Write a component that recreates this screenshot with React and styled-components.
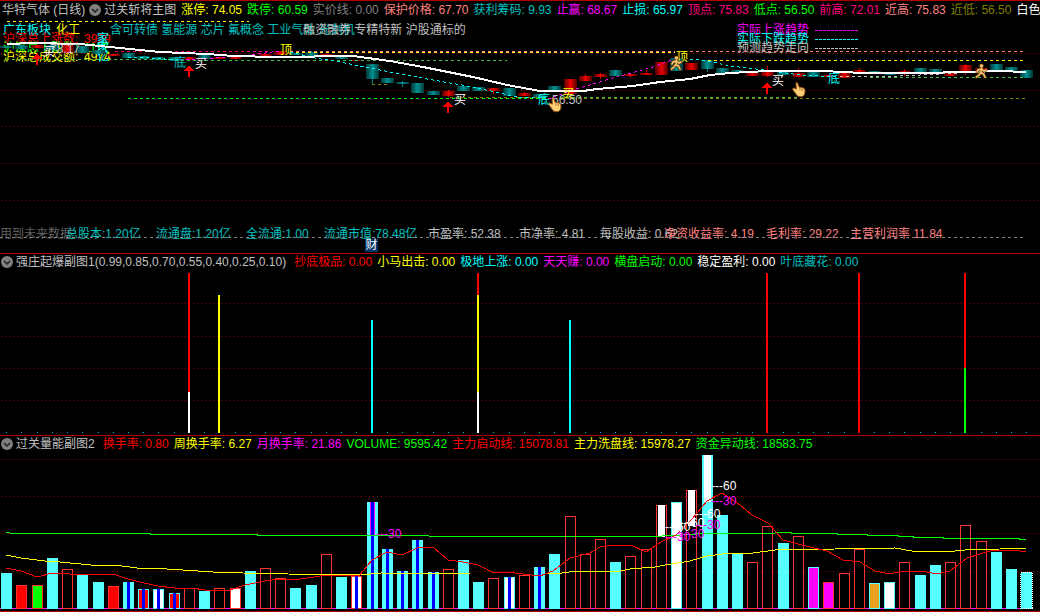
import React from 'react'
import styled, { createGlobalStyle } from 'styled-components'

const GlobalStyle = createGlobalStyle`
    body{
        margin:0;
        background:#000;
        font-family:"Liberation Sans","Noto Sans CJK SC",sans-serif;
        font-size:12px;
        color:#c0c0c0;
    }
`
const Container = styled.main`
    display:flex;
    flex-direction:column;
    overflow:hidden;
    border-bottom:1px solid #b00000;
`
const Panel = styled.section`
    border-top:1px solid #b00000;
`
const Header = styled.header`
    display:flex;
    align-items:center;
    gap:5px;
    height:18px;
    padding-left:2px;
    line-height:18px;
    white-space:nowrap;
    overflow:hidden;
`
const SubHeader = styled(Header)`
    box-sizing:border-box;
    padding-bottom:2px;
    line-height:16px;
`
const Title = styled.h2`
    margin:0;
    font-size:12px;
    font-weight:400;
    flex-shrink:0;
`
const SubTitle = styled(Title)`
    margin-right:3px;
`
const ToggleButton = styled.button`
    display:flex;
    flex-shrink:0;
    width:12px;
    height:12px;
    margin:0 -2px 0 -1px;
    padding:0;
    border:0;
    background:none;
`
const Reading = styled.span`
    flex-shrink:0;
    color:${props=>props.$color};
`
const Plot = styled.div`
    position:relative;
`
const Chart = styled.svg`
    position:relative;
    display:block;
    width:100%;
    height:auto;
    font-size:12px;
`
const Overlay = styled.div`
    position:absolute;
    inset:0;
    display:flex;
    flex-direction:column;
    justify-content:space-between;
    white-space:nowrap;
`
const Notes = styled.div`
    display:flex;
    padding:7px 0 0 3px;
`
const NotesLeft = styled.div`
    width:734px;
`
const Tags = styled.div`
    display:grid;
    grid-template-columns:53px 54px 193px auto;
    height:9px;
    line-height:9px;
`
const Counter = styled.div`
    display:grid;
    grid-template-columns:81px 13px auto;
    height:9px;
    line-height:9px;
    color:${props=>props.$color};
`
const Legend = styled.ul`
    margin:0;
    padding:0;
    list-style:none;
`
const LegendItem = styled.li`
    display:flex;
    align-items:center;
    gap:6px;
    height:9px;
    line-height:9px;
    color:${props=>props.$color};
`
const LegendLine = styled.span`
    width:43px;
    height:1px;
    background:repeating-linear-gradient(90deg,currentColor 0 3px,transparent 3px 4px);
`
const Stats = styled.div`
    display:grid;
    grid-template-columns:66px 90px 90px 78px 104px 91px 81px 64px 102px 84px auto;
    height:18px;
    margin-bottom:10px;
    line-height:18px;
`
const Badge = styled.span`
    position:absolute;
    left:365px;
    bottom:1px;
    width:13px;
    line-height:13px;
    text-align:center;
    color:#fff;
    background:#003366;
`

const mainReadings = [
    ['涨停: 74.05', '#ffff00'],
    ['跌停: 60.59', '#00ff00'],
    ['实价线: 0.00', '#808080'],
    ['保护价格: 67.70', '#ff8080'],
    ['获利筹码: 9.93', '#00c0c0'],
    ['止赢: 68.67', '#ff00ff'],
    ['止损: 65.97', '#00ffff'],
    ['顶点: 75.83', '#ff0080'],
    ['低点: 56.50', '#00ff00'],
    ['前高: 72.01', '#ff0080'],
    ['近高: 75.83', '#ff8080'],
    ['近低: 56.50', '#808000'],
    ['白色', '#ffffff'],
]
const signalReadings = [
    ['抄底极品: 0.00', '#ff0000'],
    ['小马出击: 0.00', '#ffff00'],
    ['极地上涨: 0.00', '#00ffff'],
    ['天天赚: 0.00', '#ff00ff'],
    ['横盘启动: 0.00', '#00ff00'],
    ['稳定盈利: 0.00', '#ffffff'],
    ['叶底藏花: 0.00', '#00c0c0'],
]
const volumeReadings = [
    ['换手率: 0.80', '#ff0000'],
    ['周换手率: 6.27', '#ffff00'],
    ['月换手率: 21.86', '#ff00ff'],
    ['VOLUME: 9595.42', '#00ff00'],
    ['主力启动线: 15078.81', '#ff0000'],
    ['主力洗盘线: 15978.27', '#ffff00'],
    ['资金异动线: 18583.75', '#00ff00'],
]
const stats = [
    ['用到未来数据', '#606060'],
    ['总股本:1.20亿', '#00c0c0'],
    ['流通盘:1.20亿', '#00c0c0'],
    ['全流通:1.00', '#00c0c0'],
    ['流通市值:78.48亿', '#00c0c0'],
    ['市盈率: 52.38', '#c0c0c0'],
    ['市净率: 4.81', '#c0c0c0'],
    ['每股收益: 0.62', '#c0c0c0'],
    ['净资收益率: 4.19', '#ff8080'],
    ['毛利率: 29.22', '#ff8080'],
    ['主营利润率 11.84', '#ff8080'],
]
const counters = [
    ['沪深总上涨数:', '3929', '家', '#ff0000'],
    ['沪深总下跌数:', '1117', '家', '#00ff00'],
    ['沪深总成交额:', '4974', '亿', '#ffff00'],
]
const legend = [
    ['实际上涨趋势', '#ff00ff'],
    ['实际下跌趋势', '#00ffff'],
    ['预测趋势走向', '#c0c0c0'],
]

// direction, body top, body bottom, wick top, wick bottom
const candles = [
    ['d', 46, 48], ['d', 45, 49], ['u', 45, 48], ['d', 45, 50], ['u', 45, 53], ['d', 46, 53],
    ['d', 50, 54], ['u', 54, 56], ['d', 53, 58], ['d', 56, 59], ['d', 57, 60], ['d', 57, 61],
    ['u', 57, 60], ['d', 55, 59], ['u', 57, 59], ['u', 56, 59], ['u', 55, 57], ['u', 54, 56],
    ['u', 51, 55], ['d', 53, 55], ['d', 52, 56, 51, 57], ['u', 54, 55], ['d', 57, 59], ['u', 60, 61],
    ['d', 64, 79, 64, 84], ['d', 78, 83], ['d', 82, 84, 81, 87], ['d', 83, 93], ['d', 91, 95],
    ['u', 91, 96, 90, 97], ['d', 86, 91], ['d', 87, 91], ['u', 88, 91, 88, 94], ['d', 88, 96],
    ['u', 93, 96, 92, 96], ['d', 94, 98], ['d', 86, 92], ['u', 79, 94], ['u', 76, 81, 74, 81],
    ['u', 74, 77, 73, 79], ['d', 70, 76], ['u', 74, 76, 73, 78], ['u', 73, 75, 70, 75], ['u', 62, 75],
    ['d', 58, 71], ['u', 63, 70], ['d', 60, 69, 60, 72], ['d', 68, 73], ['d', 70, 73], ['u', 73, 76],
    ['u', 71, 76, 66, 77], ['d', 71, 75], ['u', 73, 77, 68, 77], ['d', 72, 77], ['u', 75, 77],
    ['u', 73, 78], ['u', 70, 73, 68, 73], ['d', 71, 73], ['d', 73, 75], ['u', 71, 74, 69, 76],
    ['d', 68, 72], ['d', 69, 73], ['u', 73, 76], ['u', 65, 73, 64, 75], ['u', 68, 72], ['d', 64, 70],
    ['d', 67, 71], ['d', 70, 78],
]

// kind of fill, top of the bar
const volumes = [
    ['cyan', 573], ['red', 585], ['green', 585], ['cyan', 558], ['hollow', 569], ['cyan', 575],
    ['cyan', 582], ['red', 586], ['cyanBlue', 582], ['redBlue', 589], ['whiteBlue', 589],
    ['redBlue', 593], ['hollow', 588], ['cyan', 591], ['hollow', 588], ['whiteRed', 588],
    ['cyan', 571], ['hollow', 568], ['hollow', 578], ['cyan', 588], ['cyan', 585], ['hollow', 554],
    ['cyan', 577], ['whiteRedBlue', 576], ['cyanBlue', 502], ['cyanBlue', 549], ['cyanBlue', 571],
    ['cyanBlue', 540], ['cyanBlue', 572], ['hollow', 569], ['cyan', 560], ['cyan', 582],
    ['hollow', 578], ['whiteBlue', 577], ['hollow', 575], ['cyanBlue', 567], ['cyan', 554],
    ['hollow', 516], ['hollow', 554], ['hollow', 539], ['cyan', 562], ['hollow', 556],
    ['hollow', 549], ['hollow', 505], ['white', 502], ['hollow', 490], ['cyan', 455],
    ['cyan', 515], ['cyan', 554], ['hollow', 562], ['hollow', 526], ['cyan', 543], ['hollow', 536],
    ['magenta', 567], ['magentaRed', 582], ['hollow', 573], ['hollow', 549], ['orange', 583],
    ['white', 582], ['hollow', 562], ['cyan', 575], ['cyan', 565], ['hollow', 562], ['hollow', 525],
    ['hollow', 541], ['cyan', 552], ['cyan', 569], ['cyan', 572],
]
const CYAN = '#55ffff'
const RED = '#ff3232'
// edge, inside, core stripe
const fills = {
    cyan: [CYAN, CYAN],
    red: [RED, '#ff0000'],
    green: [RED, '#00ff00'],
    hollow: [RED, '#000000'],
    cyanBlue: [CYAN, CYAN, '#0000ff'],
    redBlue: [CYAN, '#ff0000', '#0000ff'],
    whiteBlue: [CYAN, '#ffffff', '#0000ff'],
    whiteRed: [RED, '#ffffff'],
    whiteRedBlue: [RED, '#ffffff', '#0000ff'],
    white: [CYAN, '#ffffff'],
    magenta: [CYAN, '#ff00ff'],
    magentaRed: [RED, '#ff00ff'],
    orange: [CYAN, '#e8a020'],
}

// x, top, bottom, colour
const signals = [
    [188, 273, 392, '#ff0000'], [188, 392, 433, '#ffffff'],
    [218, 295, 433, '#ffff00'],
    [371, 320, 433, '#00ffff'],
    [477, 273, 295, '#ff0000'], [477, 295, 392, '#ffff00'], [477, 392, 433, '#ffffff'],
    [569, 320, 433, '#00ffff'],
    [766, 273, 433, '#ff0000'],
    [858, 273, 433, '#ff0000'],
    [964, 273, 368, '#ff0000'], [964, 368, 433, '#00ff00'],
]

// text, x, baseline, colour
const marks = [
    ['底', 174, 67, '#00c0c0'], ['买', 195, 68, '#ffffff'], ['买', 43, 56, '#ffffff'],
    ['78.17', 50, 53, '#c0c0c0'], ['顶', 280, 54, '#ffff00'], ['买', 454, 104, '#ffffff'],
    ['底', 538, 104, '#00ffff'], ['56.50', 552, 104, '#c0c0c0'], ['买', 562, 98, '#ffff00'],
    ['顶', 676, 61, '#ffff00'], ['买', 772, 85, '#ffffff'], ['底', 828, 83, '#00ffff'],
]
const volumeMarks = [
    ['---30', 376, 538, '#ff00ff'],
    ['---60', 665, 531, '#ffffff'], ['---30', 665, 541, '#ff00ff'],
    ['---60', 679, 527, '#ffffff'], ['---30', 679, 538, '#ff00ff'],
    ['---60', 695, 518, '#ffffff'], ['---30', 695, 529, '#ff00ff'],
    ['---60', 711, 490, '#ffffff'], ['---30', 711, 505, '#ff00ff'],
]

// x1, y1, x2, y2, colour
const dashes = [
    [7, 21, 249, 21, '#ffff00'],
    [115, 51, 270, 51, '#ff0080'],
    [290, 51, 675, 51, '#ff8080'],
    [290, 52, 675, 52, '#ffff00'],
    [690, 51, 1026, 51, '#ff8080'],
    [708, 60, 1026, 60, '#ffff00'],
    [6, 59, 175, 59, '#40c040'],
    [175, 60, 507, 60, '#40c040'],
    [128, 98, 545, 98, '#00ff00'],
    [560, 97, 797, 97, '#40c040'],
    [560, 98, 1026, 98, '#808000'],
    [450, 97, 545, 97, '#808000'],
    [372, 84, 388, 84, '#808000'],
    [870, 77, 1026, 77, '#40c040'],
    [0, 237, 1026, 237, '#808080'],
]

const centerOf = (i) => Math.round(6.2 + i * 15.225)

const Chevron = () => (
    <ToggleButton type="button" aria-label="指标菜单">
        <svg width="12" height="12" viewBox="0 0 12 12">
            <circle cx="6" cy="6" r="6" fill="#808080"/>
            <path d="M3 5l3 3 3-3" fill="none" stroke="#202020" strokeWidth="1.5"/>
        </svg>
    </ToggleButton>
)

const Readings = ({ items }) => items.map(([text, color]) => (
    <Reading key={text} $color={color}>{text}</Reading>
))

const Grid = ({ rows }) => rows.map((y) => (
    <line key={y} x1="1" x2="1040" y1={y + 0.5} y2={y + 0.5} stroke="#a00000" strokeDasharray="1 3" shapeRendering="crispEdges"/>
))

const Dashed = ({ points, color }) => (
    <polyline points={points} fill="none" stroke={color} strokeDasharray="3 3" shapeRendering="crispEdges"/>
)

const Labels = ({ items }) => items.map(([text, x, y, color]) => (
    <text key={`${x}-${y}`} x={x} y={y} fill={color}>{text}</text>
))

const Arrow = ({ x, y }) => (
    <path d={`M${x} ${y}l5 6h-4v6h-2v-6h-4z`} fill="#ff0000" shapeRendering="crispEdges"/>
)

const Hand = ({ x, y }) => (
    <g transform={`translate(${x} ${y})`}>
        <path d="M4 0.5c1-.4 1.6.3 2 1.4l1 3.2 3 .5c2 .4 3 1.4 3 3.4 0 3-1 5.8-4 5.8-3 .1-4.400-1.400-5.400-3.400L.8 7.700c-.5-1 .5-2 1.500-1.500l2 1z" fill="#ffd078" stroke="#905010"/>
        <path d="M8 6v2.500M10.200 6.500v2.500" stroke="#b07030"/>
    </g>
)

const Runner = ({ x, y }) => {
    const body = 'M6.500 4L6 8.500M6.500 5L3 6L2 8M6.500 5L9 7L11 6M6 8.500L4 11L1.500 13M6 8.500L8.500 10L10 13'
    return (
        <g transform={`translate(${x} ${y})`} fill="none" strokeLinecap="round">
            <circle cx="6.500" cy="1.800" r="2.400" fill="#704010"/>
            <path d={body} stroke="#704010" strokeWidth="3"/>
            <circle cx="6.500" cy="1.800" r="1.600" fill="#ffc870"/>
            <path d={body} stroke="#ffc870" strokeWidth="1.500"/>
        </g>
    )
}

const Candle = ({ index, data }) => {
    const [dir, top, bottom, high, low] = data
    const x = centerOf(index)
    return (
        <g shapeRendering="crispEdges">
            {high && <rect x={x} y={high} width="1" height={low - high} fill={dir === 'u' ? '#d00000' : '#008888'}/>}
            <rect x={x - 6} y={top} width="13" height={bottom - top} fill={`url(#${dir})`}/>
        </g>
    )
}

const VolumeBar = ({ index, data }) => {
    const [kind, top] = data
    const [edge, inside, core] = fills[kind]
    const x = centerOf(index) - 5
    return (
        <g shapeRendering="crispEdges">
            <rect x={x} y={top} width="11" height={609 - top} fill={edge}/>
            <rect x={x + 1} y={top + 1} width="9" height={607 - top} fill={inside}/>
            {core && <rect x={x + 4} y={top} width="3" height={609 - top} fill={core}/>}
        </g>
    )
}

const MainPanel = () => (
    <Panel>
        <Header>
            <Title>华特气体 (日线)</Title>
            <Chevron/>
            <Title>过关斩将主图</Title>
            <Readings items={mainReadings}/>
        </Header>
        <Plot>
            <Overlay>
                <Notes>
                    <NotesLeft>
                        <Tags>
                            <Reading $color="#00ffff">广东板块</Reading>
                            <Reading $color="#ffff00">化工</Reading>
                            <Reading $color="#00c0c0">含可转债 氢能源 芯片 氟概念 工业气体 光刻机</Reading>
                            <Reading $color="#c0c0c0">融资融券 专精特新 沪股通标的</Reading>
                        </Tags>
                        {counters.map(([label, value, unit, color]) => (
                            <Counter key={label} $color={color}>
                                <span>{label}</span>
                                <span>{value}</span>
                                <Reading $color="#00ffff">{unit}</Reading>
                            </Counter>
                        ))}
                    </NotesLeft>
                    <Legend>
                        {legend.map(([label, color]) => (
                            <LegendItem key={label} $color={color}>
                                {label}
                                <LegendLine/>
                            </LegendItem>
                        ))}
                    </Legend>
                </Notes>
                <Stats>
                    <Readings items={stats}/>
                </Stats>
                <Badge>财</Badge>
            </Overlay>
            <Chart viewBox="0 19 1040 234">
                <defs>
                    <linearGradient id="u">
                        <stop offset="0" stopColor="#500000"/>
                        <stop offset="0.5" stopColor="#f00000"/>
                        <stop offset="1" stopColor="#500000"/>
                    </linearGradient>
                    <linearGradient id="d">
                        <stop offset="0" stopColor="#003838"/>
                        <stop offset="0.5" stopColor="#009090"/>
                        <stop offset="1" stopColor="#003838"/>
                    </linearGradient>
                </defs>
                <Grid rows={[53, 90, 126, 163, 200]}/>
                {candles.map((data, i) => <Candle key={i} index={i} data={data}/>)}
                {dashes.map(([x1, y1, x2, y2, color]) => (
                    <Dashed key={`${x1}-${y1}`} points={`${x1},${y1 + 0.5} ${x2},${y2 + 0.5}`} color={color}/>
                ))}
                <Dashed points="128,57 150,58 180,60" color="#00ffff"/>
                <Dashed points="180,60 215,58 250,55 280,51" color="#ff00ff"/>
                <Dashed points="290,52 315,58 340,62 390,72 427,79 473,87 517,97 545,98" color="#00ffff"/>
                <Dashed points="548,99 573,90 613,78 653,67 677,58" color="#ff00ff"/>
                <Dashed points="690,59 708,61 730,66 765,70 800,75 838,77" color="#00ffff"/>
                <Dashed points="840,77 900,76 960,73 1000,71" color="#c0c0c0"/>
                <polyline
                    points="7,44 33,43 80,44 100,46 120,48 160,52 207,54 233,56 277,57 353,56 390,61 423,67 473,77 507,85 540,91 583,91 597,89 633,86 660,82 690,79 710,75 730,73 767,71 823,71 863,73 917,73 970,72 1000,71 1026,72"
                    fill="none" stroke="#fff" strokeWidth="2" shapeRendering="crispEdges"
                />
                <Labels items={marks}/>
                <Arrow x={37} y={53}/>
                <Arrow x={189} y={65}/>
                <Arrow x={448} y={101}/>
                <Arrow x={767} y={82}/>
                <Hand x={548} y={97}/>
                <Hand x={792} y={82}/>
                <Runner x={670} y={56}/>
                <Runner x={975} y={64}/>
            </Chart>
        </Plot>
    </Panel>
)

const SignalPanel = () => (
    <Panel>
        <SubHeader>
            <Chevron/>
            <SubTitle>强庄起爆副图1(0.99,0.85,0.70,0.55,0.40,0.25,0.10)</SubTitle>
            <Readings items={signalReadings}/>
        </SubHeader>
        <Chart viewBox="0 272 1040 163">
            <Grid rows={[303, 336, 368, 400]}/>
            {candles.map((data, i) => (
                <rect key={i} x={centerOf(i)} y="432" width="1" height="1" fill="#00c0c0"/>
            ))}
            {signals.map(([x, top, bottom, color]) => (
                <rect key={`${x}-${top}`} x={x} y={top} width="2" height={bottom - top} fill={color}/>
            ))}
        </Chart>
    </Panel>
)

const VolumePanel = () => (
    <Panel>
        <SubHeader>
            <Chevron/>
            <SubTitle>过关量能副图2</SubTitle>
            <Readings items={volumeReadings}/>
        </SubHeader>
        <Chart viewBox="0 454 1040 157">
            <Grid rows={[459, 496, 533, 571]}/>
            <rect x="0" y="608" width="1031" height="1" fill="#ff00ff"/>
            {volumes.map((data, i) => <VolumeBar key={i} index={i} data={data}/>)}
            <g shapeRendering="crispEdges" fill="none">
                <path d="M370.500 502v33M374.500 502v33" stroke="#ff00ff"/>
                <path d="M661.500 505v32M691.500 490v36M707.500 455v47" stroke="#fff" strokeWidth="7"/>
                <rect x="1020.500" y="572.500" width="12" height="36" stroke="#fff" strokeDasharray="1 1"/>
                <polyline
                    points="6,532.500 14,533.500 150,533.500 151,534.500 257,534.500 258,535.500 373,535.500 485,536.500 654,536.500 670,535.500 690,534.500 702,533.500 774,533.500 776,532.500 791,532.500 792,533.500 837,533.500 838,534.500 867,534.500 868,535.500 898,535.500 899,536.500 913,536.500 914,537.500 943,537.500 944,538.500 1019,538.500 1020,539.500 1026,539.500"
                    stroke="#00ff00"
                />
                <polyline
                    points="6,555 21,558 45,561 60,562 91,565 122,566 137,568 167,569 198,571 213,572 243,573 288,574 360,575 381,573 470,574 545,574 562,573 577,571 620,571 630,569 655,567 665,565 690,561 707,556 730,553 753,553 775,550 835,549 895,548 912,551 955,551 965,550 1000,549 1026,548"
                    stroke="#ffff00"
                />
                <polyline
                    points="6,568 21,571 37,577 52,573 70,574 113,574 128,579 144,583 158,586 175,588 192,588 205,590 230,590 245,585 265,581 280,579 300,579 314,577 326,575 359,576 372,560 387,552 402,555 417,548 433,547 448,560 463,562 478,565 492,572 515,573 540,576 553,571 570,558 590,553 600,547 615,545 631,545 646,552 661,542 676,535 692,519 707,501 722,493 740,505 752,515 768,523 783,540 810,547 827,551 843,560 860,562 875,571 890,574 903,571 922,571 937,574 950,571 967,558 993,550 1013,550 1026,552"
                    stroke="#ff0000"
                />
            </g>
            <Labels items={volumeMarks}/>
        </Chart>
    </Panel>
)

const App = () => {
    return (
        <Container>
            <GlobalStyle/>
            <MainPanel/>
            <SignalPanel/>
            <VolumePanel/>
        </Container>
    )
}

export default App
